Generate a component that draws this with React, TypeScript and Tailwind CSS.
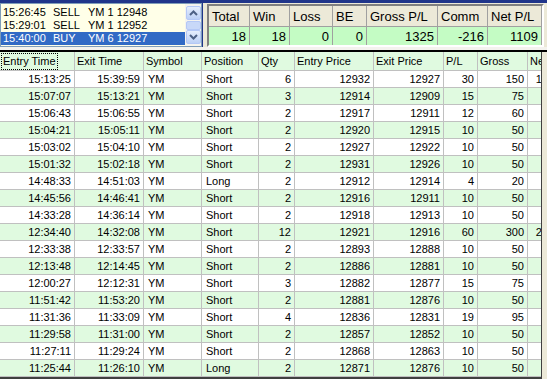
import React from 'react';

type Trade = {
  entry: string;
  exit: string;
  pos: string;
  qty: number;
  entryPrice: number;
  exitPrice: number;
  pl: number;
  gross: number;
};

const trades: Trade[] = [
  { entry: '15:13:25', exit: '15:39:59', pos: 'Short', qty: 6, entryPrice: 12932, exitPrice: 12927, pl: 30, gross: 150 },
  { entry: '15:07:07', exit: '15:13:21', pos: 'Short', qty: 3, entryPrice: 12914, exitPrice: 12909, pl: 15, gross: 75 },
  { entry: '15:06:43', exit: '15:06:55', pos: 'Short', qty: 2, entryPrice: 12917, exitPrice: 12911, pl: 12, gross: 60 },
  { entry: '15:04:21', exit: '15:05:11', pos: 'Short', qty: 2, entryPrice: 12920, exitPrice: 12915, pl: 10, gross: 50 },
  { entry: '15:03:02', exit: '15:04:10', pos: 'Short', qty: 2, entryPrice: 12927, exitPrice: 12922, pl: 10, gross: 50 },
  { entry: '15:01:32', exit: '15:02:18', pos: 'Short', qty: 2, entryPrice: 12931, exitPrice: 12926, pl: 10, gross: 50 },
  { entry: '14:48:33', exit: '14:51:03', pos: 'Long', qty: 2, entryPrice: 12912, exitPrice: 12914, pl: 4, gross: 20 },
  { entry: '14:45:56', exit: '14:46:41', pos: 'Short', qty: 2, entryPrice: 12916, exitPrice: 12911, pl: 10, gross: 50 },
  { entry: '14:33:28', exit: '14:36:14', pos: 'Short', qty: 2, entryPrice: 12918, exitPrice: 12913, pl: 10, gross: 50 },
  { entry: '12:34:40', exit: '14:32:08', pos: 'Short', qty: 12, entryPrice: 12921, exitPrice: 12916, pl: 60, gross: 300 },
  { entry: '12:33:38', exit: '12:33:57', pos: 'Short', qty: 2, entryPrice: 12893, exitPrice: 12888, pl: 10, gross: 50 },
  { entry: '12:13:48', exit: '12:14:45', pos: 'Short', qty: 2, entryPrice: 12886, exitPrice: 12881, pl: 10, gross: 50 },
  { entry: '12:00:27', exit: '12:12:31', pos: 'Short', qty: 3, entryPrice: 12882, exitPrice: 12877, pl: 15, gross: 75 },
  { entry: '11:51:42', exit: '11:53:20', pos: 'Short', qty: 2, entryPrice: 12881, exitPrice: 12876, pl: 10, gross: 50 },
  { entry: '11:31:36', exit: '11:33:09', pos: 'Short', qty: 4, entryPrice: 12836, exitPrice: 12831, pl: 19, gross: 95 },
  { entry: '11:29:58', exit: '11:31:00', pos: 'Short', qty: 2, entryPrice: 12857, exitPrice: 12852, pl: 10, gross: 50 },
  { entry: '11:27:11', exit: '11:29:24', pos: 'Short', qty: 2, entryPrice: 12868, exitPrice: 12863, pl: 10, gross: 50 },
  { entry: '11:25:44', exit: '11:26:10', pos: 'Long', qty: 2, entryPrice: 12871, exitPrice: 12876, pl: 10, gross: 50 },
];

const orders = [
  { time: '15:26:45', side: 'SELL', desc: 'YM 1 12948' },
  { time: '15:29:01', side: 'SELL', desc: 'YM 1 12952' },
  { time: '15:40:00', side: 'BUY', desc: 'YM 6 12927' },
];

const stats = [
  { label: 'Total', value: '18' },
  { label: 'Win', value: '18' },
  { label: 'Loss', value: '0' },
  { label: 'BE', value: '0' },
  { label: 'Gross P/L', value: '1325' },
  { label: 'Comm', value: '-216' },
  { label: 'Net P/L', value: '1109' },
];

const headers = ['Entry Time', 'Exit Time', 'Symbol', 'Position', 'Qty', 'Entry Price', 'Exit Price', 'P/L', 'Gross', 'Net'];

function ScrollBtn({ up }: { up?: boolean }) {
  return (
    <div className="h-[14px] w-[15px] rounded-[2px] border border-[#b4c8f6] bg-gradient-to-b from-[#e6eefc] to-[#bcd0f6] flex items-center justify-center">
      <svg width="9" height="6" viewBox="0 0 9 6">
        <path d={up ? 'M1 5 L4.5 1.5 L8 5' : 'M1 1 L4.5 4.5 L8 1'} fill="none" stroke="#4d6185" strokeWidth="2" />
      </svg>
    </div>
  );
}

export default function App() {
  return (
    <div className="w-[547px] h-[379px] overflow-hidden bg-[#ece9d8] text-black text-[11px] leading-none font-['Liberation_Sans',Arial,sans-serif]">
      {/* top panel */}
      <div className="h-[47px] flex bg-[#20358a] pt-[3px]">
        <div className="w-[202px] h-[44px] flex bg-[#ffffe8] border border-[#7f9db9]">
          <div className="flex-1 pt-[2px]">
            {orders.map((o, i) => (
              <div
                key={o.time}
                className={`h-[13px] flex items-center pl-[2px] ${i === 2 ? 'bg-[#316ac5] text-white' : ''}`}
              >
                <span className="w-[50px]">{o.time}</span>
                <span className="w-[35px]">{o.side}</span>
                <span>{o.desc}</span>
              </div>
            ))}
          </div>
          <div className="w-[16px] flex flex-col items-center justify-between py-[2px] bg-[#f4f3ee]">
            <ScrollBtn up />
            <div className="h-[9px] w-[15px] rounded-[2px] border border-[#b4c8f6] bg-[#c8d8f8]" />
            <ScrollBtn />
          </div>
        </div>
        <div className="flex-1 bg-[#ece9d8] ml-[1px] pl-[4px] pr-[3px] pt-[1px]">
          <div className="border-2 border-t-[#808080] border-l-[#808080] border-b-[#ffffff] border-r-[#ffffff] text-[13px]">
            <div className="grid grid-cols-[41px_40px_43px_34px_71px_50px_1fr] bg-[#ece9d8]">
              {stats.map((s) => (
                <div key={s.label} className="h-[21px] flex items-center pl-[3px] border-r border-b border-[#a0a0a0]">
                  {s.label}
                </div>
              ))}
            </div>
            <div className="grid grid-cols-[41px_40px_43px_34px_71px_50px_1fr] bg-[#c4fcc4]">
              {stats.map((s) => (
                <div key={s.label} className="h-[18px] flex items-center justify-end pr-[3px] border-r border-[#a0a0a0]">
                  {s.value}
                </div>
              ))}
            </div>
          </div>
        </div>
      </div>
      <div className="h-[3px] bg-[#f4f3ee]" />
      <div className="h-[2px] bg-[#000000]" />

      {/* trades table */}
      <div className="flex h-[327px]">
        <div className="w-[541px] overflow-hidden bg-white border-b-2 border-[#404040]">
          <div className="grid grid-cols-[75px_69px_58px_57px_36px_79px_70px_34px_50px_30px] w-[558px]">
            {headers.map((h, i) => (
              <div key={h} className="h-[19px] flex items-center pl-[2px] bg-[#e0fae0] border-r border-b border-[#c0c0c0]">
                <span className={i === 0 ? 'outline outline-1 outline-dotted outline-[#000000] px-[1px] py-[2px]' : ''}>{h}</span>
              </div>
            ))}
            {trades.map((t, r) => {
              const bg = r % 2 === 1 ? 'bg-[#e0fae0]' : 'bg-white';
              const cell = `h-[17px] flex items-center border-r border-b border-[#c0c0c0] ${bg}`;
              const right = `${cell} justify-end pr-[3px]`;
              const left = `${cell} pl-[4px]`;
              return (
                <React.Fragment key={t.entry}>
                  <div className={right}>{t.entry}</div>
                  <div className={right}>{t.exit}</div>
                  <div className={left}>YM</div>
                  <div className={left}>{t.pos}</div>
                  <div className={right}>{t.qty}</div>
                  <div className={right}>{t.entryPrice}</div>
                  <div className={right}>{t.exitPrice}</div>
                  <div className={right}>{t.pl}</div>
                  <div className={right}>{t.gross}</div>
                  <div className={right}>{t.gross - t.qty * 4}</div>
                </React.Fragment>
              );
            })}
          </div>
        </div>
        <div className="flex-1 bg-[#ece9d8] border-l border-[#404040]" />
      </div>
    </div>
  );
}
